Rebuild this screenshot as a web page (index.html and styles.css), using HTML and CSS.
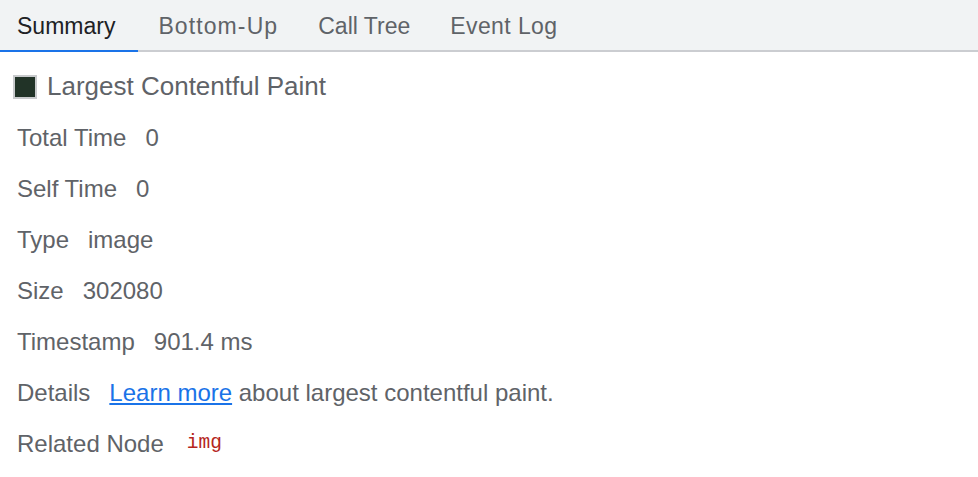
FILE: index.html
```html
<!DOCTYPE html>
<html>
<head>
<meta charset="utf-8">
<link rel="stylesheet" href="styles.css">
</head>
<body>
<div class="tabbar">
  <div class="tab active">Summary</div>
  <div class="tab tab-wide">Bottom-Up</div>
  <div class="tab">Call Tree</div>
  <div class="tab tab-event">Event Log</div>
</div>
<div class="details">
  <div class="title"><span class="swatch"></span><span>Largest Contentful Paint</span></div>
  <div class="rows">
    <div class="row"><span class="label">Total Time</span><span>0</span></div>
    <div class="row"><span class="label">Self Time</span><span>0</span></div>
    <div class="row"><span class="label">Type</span><span>image</span></div>
    <div class="row"><span class="label">Size</span><span>302080</span></div>
    <div class="row"><span class="label">Timestamp</span><span>901.4 ms</span></div>
    <div class="row"><span class="label">Details</span><span><a class="link" href="#">Learn more</a> about largest contentful paint.</span></div>
    <div class="row"><span class="label">Related Node</span><span class="node">img</span></div>
  </div>
</div>
</body>
</html>
```
FILE: styles.css
```css
html, body {
  margin: 0;
  padding: 0;
  background: #ffffff;
}
body {
  font-family: "Liberation Sans", Arial, sans-serif;
  color: #5f6368;
}
.tabbar {
  display: flex;
  height: 50px;
  background: #f1f3f4;
  border-bottom: 2px solid #cbcdd1;
}
.tab {
  padding: 13px 20px 0;
  font-size: 23px;
  line-height: 26px;
  color: #5f6368;
  border-bottom: 2px solid transparent;
  margin-bottom: -2px;
}
.tab.active {
  color: #202124;
  padding-left: 17px;
  padding-right: 23px;
  border-bottom-color: #1a73e8;
}
.tab-wide {
  letter-spacing: 1.1px;
}
.tab-event {
  letter-spacing: 0.4px;
}
.details {
  padding-top: 20px;
}
.title {
  display: flex;
  align-items: center;
  gap: 10px;
  padding-left: 13px;
  height: 29px;
  font-size: 26px;
  line-height: 29px;
}
.swatch {
  width: 20px;
  height: 20px;
  border: 2px solid #c8cacc;
  background: #213327;
  flex: none;
}
.rows {
  margin-top: 11px;
  padding-left: 17px;
}
.row {
  display: flex;
  font-size: 24px;
  line-height: 51px;
  white-space: nowrap;
}
.label {
  margin-right: 19px;
}
.link {
  color: #1a73e8;
  text-decoration: underline;
}
.node {
  font-family: "Liberation Mono", "DejaVu Sans Mono", monospace;
  font-size: 19.5px;
  color: #b5261c;
  margin-left: 4px;
}
```
